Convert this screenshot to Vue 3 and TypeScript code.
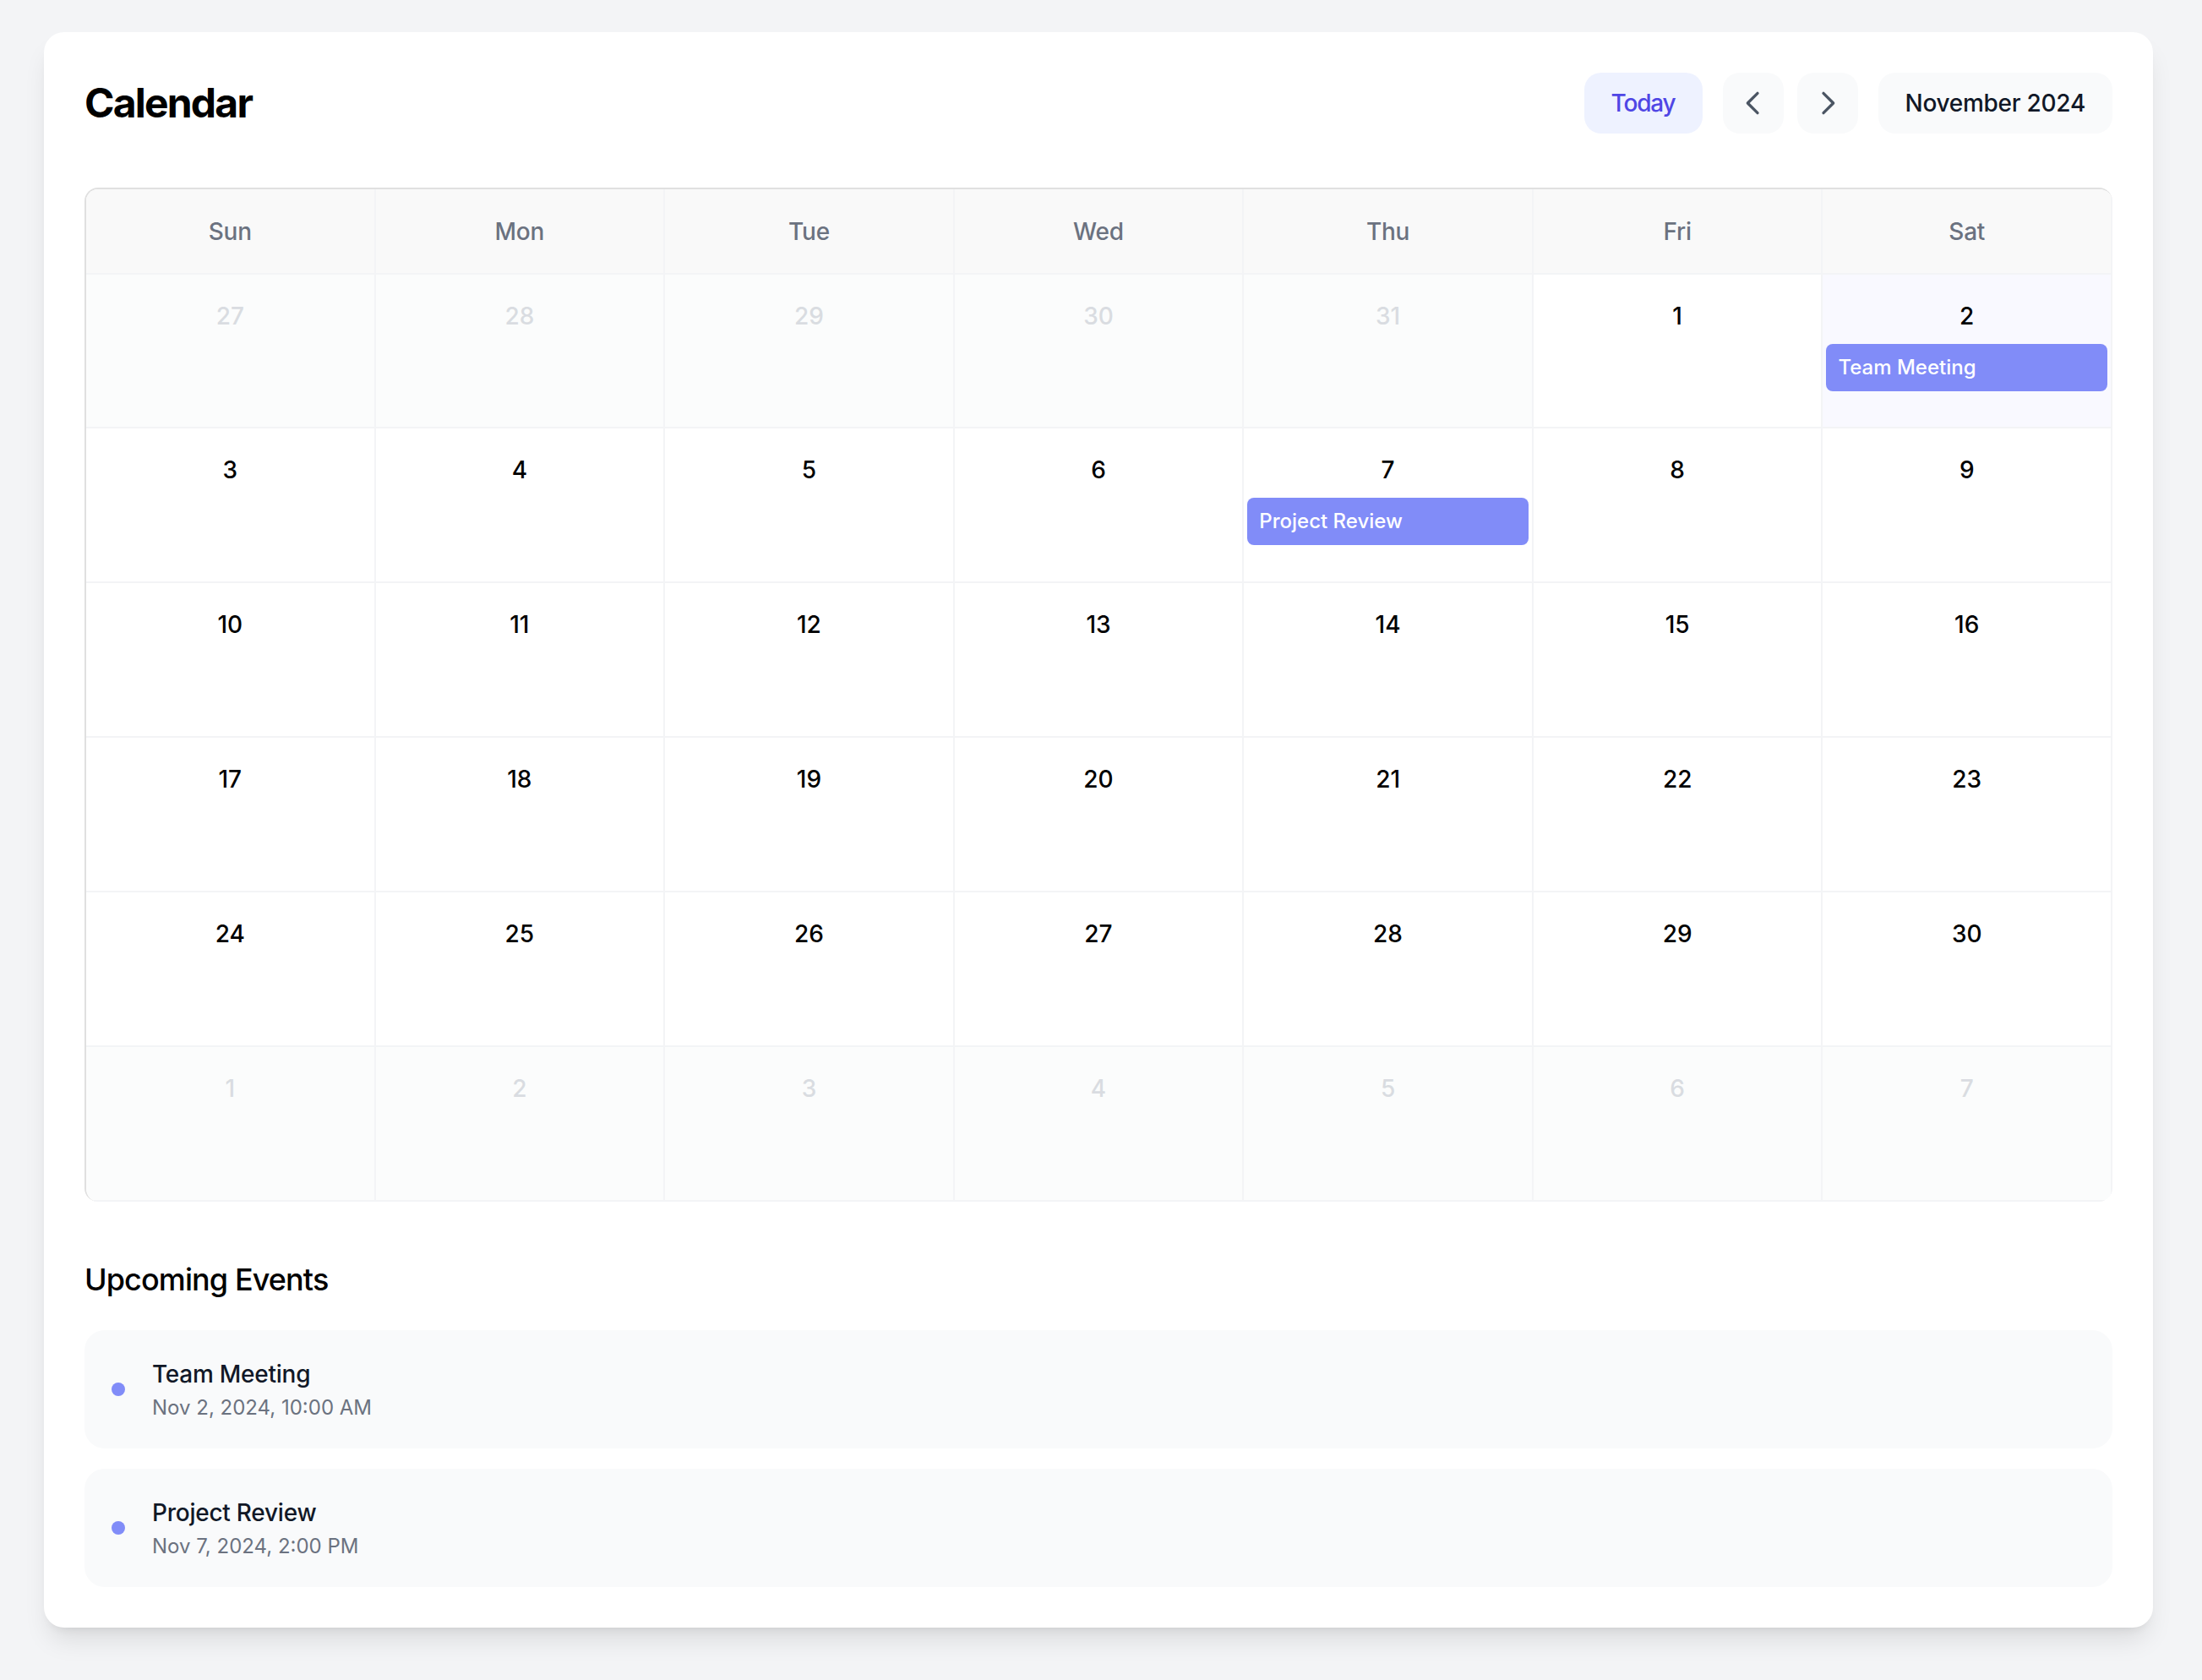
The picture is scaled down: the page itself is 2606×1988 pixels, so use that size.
<script setup lang="ts">
interface Day {
  n: number
  muted?: boolean
  active?: boolean
  event?: string
}
const weekdays: string[] = ['Sun', 'Mon', 'Tue', 'Wed', 'Thu', 'Fri', 'Sat']
const events: Record<number, string> = { 2: 'Team Meeting', 7: 'Project Review' }
const days: Day[] = [
  ...[27, 28, 29, 30, 31].map((n) => ({ n, muted: true })),
  ...Array.from({ length: 30 }, (_, i) => {
    const n = i + 1
    return { n, event: events[n], active: n === 2 }
  }),
  ...[1, 2, 3, 4, 5, 6, 7].map((n) => ({ n, muted: true })),
]
const upcoming = [
  { title: 'Team Meeting', when: 'Nov 2, 2024, 10:00 AM' },
  { title: 'Project Review', when: 'Nov 7, 2024, 2:00 PM' },
]
</script>

<template>
  <main class="page">
    <section class="card">
      <header class="top">
        <h1 class="title">Calendar</h1>
        <div class="controls">
          <button class="btn today">Today</button>
          <div class="nav">
            <button class="btn icon" aria-label="Previous month">
              <svg viewBox="0 0 24 24" width="40" height="40" fill="none" stroke="currentColor" stroke-width="2" stroke-linecap="round" stroke-linejoin="round">
                <path d="M15 19l-7-7 7-7" />
              </svg>
            </button>
            <button class="btn icon" aria-label="Next month">
              <svg viewBox="0 0 24 24" width="40" height="40" fill="none" stroke="currentColor" stroke-width="2" stroke-linecap="round" stroke-linejoin="round">
                <path d="M9 5l7 7-7 7" />
              </svg>
            </button>
          </div>
          <button class="btn month">November 2024</button>
        </div>
      </header>

      <div class="grid">
        <div v-for="w in weekdays" :key="w" class="weekday">{{ w }}</div>
        <div
          v-for="(d, i) in days"
          :key="i"
          class="cell"
          :class="{ muted: d.muted, active: d.active }"
        >
          <div class="num">{{ d.n }}</div>
          <div v-if="d.event" class="event">{{ d.event }}</div>
        </div>
      </div>

      <section class="upcoming">
        <h2 class="sub">Upcoming Events</h2>
        <ul class="list">
          <li v-for="u in upcoming" :key="u.title" class="item">
            <span class="dot"></span>
            <div>
              <div class="item-title">{{ u.title }}</div>
              <div class="item-when">{{ u.when }}</div>
            </div>
          </li>
        </ul>
      </section>
    </section>
  </main>
</template>

<style scoped>
.page {
  padding: 38px 58px 62px 52px;
  font-family: Inter, "Liberation Sans", sans-serif;
}
.card {
  background: #fff;
  border-radius: 24px;
  padding: 48px;
  box-shadow: 0 20px 30px -6px rgba(0, 0, 0, 0.1), 0 8px 12px -8px rgba(0, 0, 0, 0.1);
}
.top {
  display: flex;
  justify-content: space-between;
  align-items: center;
  margin-bottom: 64px;
}
.title {
  margin: 0;
  font-size: 48px;
  line-height: 72px;
  font-weight: 700;
  letter-spacing: -1.8px;
  color: #000;
}
.controls {
  display: flex;
  align-items: center;
  gap: 24px;
}
.nav {
  display: flex;
  gap: 16px;
}
.btn {
  height: 72px;
  border: 0;
  border-radius: 20px;
  padding: 0 32px;
  font-family: inherit;
  font-size: 28px;
  font-weight: 500;
  line-height: 40px;
  background: #f9fafb;
  color: #111827;
}
.today {
  background: #eef2ff;
  color: #4f46e5;
  letter-spacing: -1.2px;
}
.month {
  letter-spacing: -0.27px;
}
.icon {
  width: 72px;
  padding: 0;
  color: #4b5563;
  display: flex;
  align-items: center;
  justify-content: center;
}
.grid {
  display: grid;
  grid-template-columns: repeat(7, minmax(0, 1fr));
  grid-template-rows: 101px 182px;
  grid-auto-rows: 183px;
  border-top: 2px solid #e0e0e0;
  border-left: 2px solid #e0e0e0;
  border-radius: 16px;
  overflow: hidden;
}
.weekday {
  display: flex;
  align-items: center;
  justify-content: center;
  background: #f9f9f9;
  border-right: 2px solid #f3f4f6;
  border-bottom: 2px solid #f3f4f6;
  color: #6b7280;
  font-size: 28px;
  font-weight: 500;
  letter-spacing: -0.2px;
}
.cell {
  padding: 29px 4px 4px;
  border-right: 2px solid #f3f4f6;
  border-bottom: 2px solid #f3f4f6;
  background: #fff;
}
.cell.muted {
  background: #fbfcfc;
}
.cell.active {
  background: #f9f9ff;
}
.num {
  text-align: center;
  font-size: 28px;
  line-height: 40px;
  font-weight: 500;
  color: #000;
}
.muted .num {
  color: #d9dce1;
}
.event {
  margin-top: 13px;
  padding: 8px 14px;
  border-radius: 8px;
  background: #818cf8;
  color: #fff;
  font-size: 24px;
  line-height: 40px;
  font-weight: 500;
}
.upcoming {
  margin-top: 64px;
}
.sub {
  margin: 0 0 32px;
  font-size: 36px;
  line-height: 56px;
  font-weight: 500;
  letter-spacing: -0.9px;
  color: #000;
}
.list {
  list-style: none;
  margin: 0;
  padding: 0;
  display: flex;
  flex-direction: column;
  gap: 24px;
}
.item {
  display: flex;
  align-items: center;
  gap: 32px;
  padding: 32px;
  border-radius: 24px;
  background: #f9fafb;
}
.dot {
  width: 16px;
  height: 16px;
  border-radius: 50%;
  background: #818cf8;
}
.item-title {
  font-size: 28px;
  line-height: 40px;
  font-weight: 500;
  letter-spacing: -0.25px;
  color: #111827;
}
.item-when {
  margin-top: 4px;
  font-size: 24px;
  line-height: 32px;
  color: #6b7280;
}
</style>

<style>
html,
body {
  margin: 0;
  background: #f3f4f6;
}
</style>
